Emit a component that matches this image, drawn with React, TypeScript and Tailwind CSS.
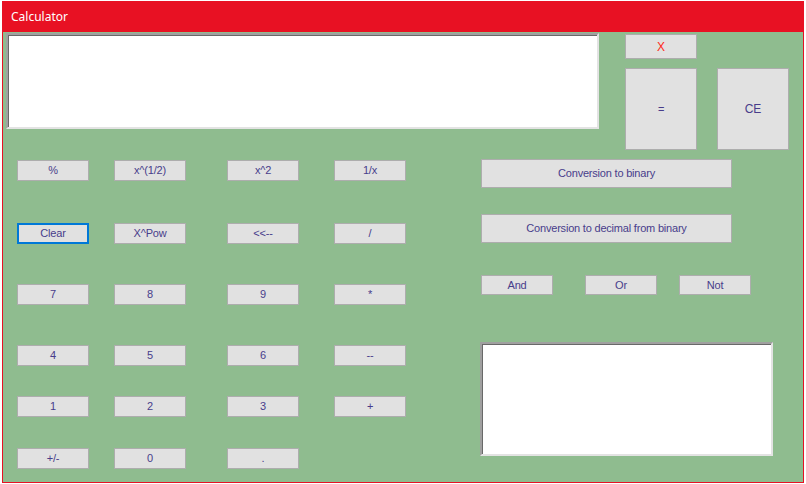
import React from 'react';

const btn =
  'flex items-center justify-center bg-[#e1e1e1] border border-[#adadad] text-[11px] tracking-[-0.2px] text-[#483d8b] leading-none';

const textBox =
  'bg-white border-2 border-t-[#a0a0a0] border-l-[#a0a0a0] border-b-[#e3e3e3] border-r-[#e3e3e3] shadow-[inset_1px_1px_0_#696969]';

const keys: [string, boolean?][] = [
  ['%'], ['x^(1/2)'], ['x^2'], ['1/x'],
  ['Clear', true], ['X^Pow'], ['<<--'], ['/'],
  ['7'], ['8'], ['9'], ['*'],
  ['4'], ['5'], ['6'], ['--'],
  ['1'], ['2'], ['3'], ['+'],
  ['+/-'], ['0'], ['.'],
];

export default function App() {
  return (
    <div className="w-[806px] h-[484px] bg-white pl-[2px] pt-[1px] overflow-hidden" style={{ fontFamily: '"Liberation Sans", Arial, sans-serif' }}>
      <div className="w-[802px] h-[482px] flex flex-col border-x border-b border-[#e81123]">
        {/* title bar */}
        <div className="h-[31px] -mx-px bg-[#e81123] flex items-center pl-[9px] shrink-0">
          <span className="text-white text-[12px]" style={{ fontFamily: '"Noto Sans", "Open Sans", sans-serif' }}>Calculator</span>
        </div>

        <div className="flex-1 bg-[#8fbc8f] flex flex-col">
          {/* top row */}
          <div className="flex items-start pl-[3px] pt-[1px]">
            <div className={`${textBox} w-[593px] h-[96px]`} />
            <div className="ml-[26px] mt-[1px] flex flex-col">
              <div className={`${btn} w-[72px] h-[25px] !text-[#ff2a1a] !text-[12px]`}>X</div>
              <div className="mt-[9px] flex gap-[20px]">
                <div className={`${btn} w-[72px] h-[82px]`}>=</div>
                <div className={`${btn} w-[72px] h-[82px] !text-[12px]`}>CE</div>
              </div>
            </div>
          </div>

          {/* bottom */}
          <div className="flex items-start">
            <div className="ml-[14px] mt-[10px] grid grid-cols-[97px_113px_107px_72px] grid-rows-[63px_61px_61px_51px_52px_21px] items-start">
              {keys.map(([label, focus]) => (
                <div
                  key={label}
                  className={`${btn} w-[72px] h-[21px] ${focus ? '!border-2 !border-[#0078d7]' : ''}`}
                >
                  {label}
                </div>
              ))}
            </div>

            <div className="ml-[75px] mt-[9px] flex flex-col">
              <div className={`${btn} w-[251px] h-[29px]`}>Conversion to binary</div>
              <div className={`${btn} w-[251px] h-[29px] mt-[26px]`}>Conversion to decimal from binary</div>
              <div className="flex mt-[32px]">
                <div className={`${btn} w-[72px] h-[20px]`}>And</div>
                <div className={`${btn} w-[72px] h-[20px] ml-[32px]`}>Or</div>
                <div className={`${btn} w-[72px] h-[20px] ml-[22px]`}>Not</div>
              </div>
              <div className={`${textBox} w-[293px] h-[114px] mt-[47px] -ml-px`} />
            </div>
          </div>
        </div>
      </div>
    </div>
  );
}
